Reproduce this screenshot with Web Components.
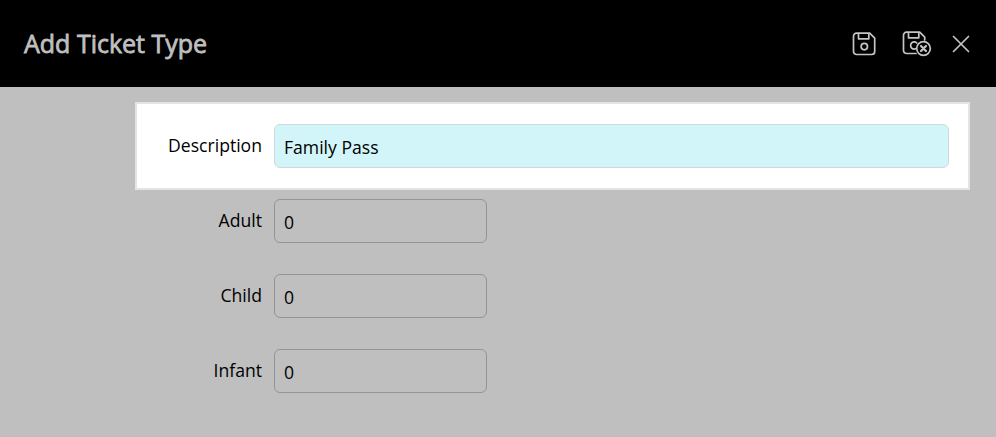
<!DOCTYPE html>
<html lang="en"><head><meta charset="utf-8"><title>Add Ticket Type</title>
<style>html,body{margin:0;padding:0;background:#bfbfbf;height:437px;overflow:hidden;font-family:"Open Sans",sans-serif}</style>
</head><body>
<ticket-dialog heading="Add Ticket Type">
  <form-row label="Description" highlighted wide>Family Pass</form-row>
  <form-row label="Adult">0</form-row>
  <form-row label="Child">0</form-row>
  <form-row label="Infant">0</form-row>
</ticket-dialog>
<script>
class IconButton extends HTMLElement{
  constructor(){super();const kind=this.getAttribute('kind');
    const icons={
      save:`<svg width="24" height="24" viewBox="0 0 24 24"><path d="M4.5 1.2h13.2l5 5v13.3a3 3 0 0 1-3 3H4.5a3 3 0 0 1-3-3V4.2a3 3 0 0 1 3-3z"/><path d="M6.5 1.5v5.3h10.3V1.5"/><circle cx="12.3" cy="14.6" r="3.2"/></svg>`,
      cancel:`<svg width="30" height="26" viewBox="0 0 30 26"><path d="M14 22.5H4.5a3 3 0 0 1-3-3V4.2a3 3 0 0 1 3-3h13.2l5 5v2.8"/><path d="M6.5 1.5v5.3h10.3V1.5"/><path d="M14.8 12a3.6 3.6 0 1 0 0 5"/><circle cx="21.5" cy="17.5" r="6.8" fill="#000"/><path d="M19 15l5 5M24 15l-5 5" stroke-width="2.2"/></svg>`,
      close:`<svg width="18" height="18" viewBox="0 0 18 18"><path d="M1.5 1.5l15 15M16.5 1.5l-15 15"/></svg>`
    };
    this.attachShadow({mode:'open'}).innerHTML=`<style>:host{display:flex;align-items:center;justify-content:center}svg{display:block;fill:none;stroke:#c4c4c4;stroke-width:1.7;stroke-linecap:round;stroke-linejoin:round}</style>${icons[kind]}`;
  }
}
class TicketDialog extends HTMLElement{
  constructor(){super();
    this.attachShadow({mode:'open'}).innerHTML=`<style>
      :host{display:block;width:996px;height:437px;background:#bfbfbf}
      header{height:87px;background:#000;display:flex;align-items:center;padding:0 26px 0 24px;box-sizing:border-box}
      h1{margin:0 auto 2px 0;font:400 25px/1.36 "Open Sans",sans-serif;-webkit-text-stroke:.8px #bfbfbf;color:#bfbfbf}
      .actions{display:flex;align-items:center;gap:26px}
      .actions icon-button:last-child{margin-left:-6px}
      main{padding:15px 26px 0 135px;display:block}
    </style>
    <header><h1></h1><div class="actions"><icon-button kind="save"></icon-button><icon-button kind="cancel"></icon-button><icon-button kind="close"></icon-button></div></header>
    <main><slot></slot></main>`;
    this.shadowRoot.querySelector('h1').textContent=this.getAttribute('heading');
  }
}
class FormRow extends HTMLElement{
  constructor(){super();
    this.attachShadow({mode:'open'}).innerHTML=`<style>
      :host{display:flex;align-items:flex-start;box-sizing:border-box;padding-right:21px;margin-bottom:31px;color:#000}
      :host([highlighted]){background:#fff;border:2px solid #e4e4e4;padding:20px 19px 20px 0;margin-bottom:9px}
      label{width:127px;flex:none;text-align:right;font:400 17.6px/42px "Open Sans",sans-serif;margin-right:12px;height:44px}
      :host([highlighted]) label{width:125px}
      .field{box-sizing:border-box;width:213px;height:44px;border:1px solid #949494;border-radius:6px;padding:0 9px;font:400 17.6px/44px "Open Sans",sans-serif;color:#000}
      :host([wide]) .field{width:675px;background:#d2f5fa;border-color:#cfdadc}
    </style><label></label><div class="field"><slot></slot></div>`;
    this.shadowRoot.querySelector('label').textContent=this.getAttribute('label');
  }
}
customElements.define('icon-button',IconButton);
customElements.define('form-row',FormRow);
customElements.define('ticket-dialog',TicketDialog);
</script>
</body></html>
